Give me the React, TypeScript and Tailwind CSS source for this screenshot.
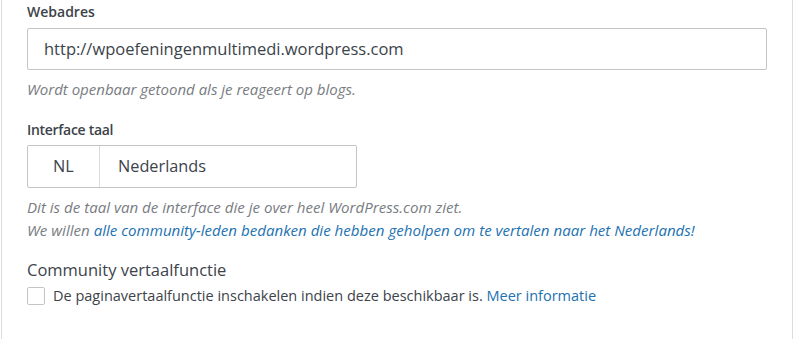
import React from 'react';

export default function App() {
  return (
    <div className="w-[794px] h-[339px] bg-white overflow-hidden font-['Open_Sans','Noto_Sans',sans-serif]">
      <div className="ml-px mr-px h-full border-x border-[#dcdcde] pl-[25px] pr-[25px] pt-[2px]">
        {/* Webadres */}
        <label className="block text-[14px] leading-[20px] font-semibold text-[#3c434a]">Webadres</label>
        <div className="mt-[6px] h-[42px] flex items-center border border-[#c3c4c7] rounded-[2px] px-4 text-[16.5px] text-[#3c434a]">
          http://wpoefeningenmultimedi.wordpress.com
        </div>
        <p className="mt-[9px] text-[15px] leading-[20px] italic text-[#787c82]">
          Wordt openbaar getoond als je reageert op blogs.
        </p>

        {/* Interface taal */}
        <label className="block mt-[21px] text-[14px] leading-[20px] font-semibold tracking-[-0.3px] text-[#3c434a]">Interface taal</label>
        <div className="mt-[5px] w-[330px] h-[43px] flex border border-[#c3c4c7] rounded-[2px] text-[16.3px] text-[#3c434a]">
          <div className="w-[72px] flex items-center justify-center border-r border-[#dcdcde]">NL</div>
          <div className="flex items-center pl-[18px]">Nederlands</div>
        </div>
        <div className="mt-[8px] text-[15.1px] leading-[23px] italic text-[#787c82]">
          <p>Dit is de taal van de interface die je over heel WordPress.com ziet.</p>
          <p>
            We willen{' '}
            <a className="text-[#2271b1]">alle community-leden bedanken die hebben geholpen om te vertalen naar het Nederlands!</a>
          </p>
        </div>

        {/* Community vertaalfunctie */}
        <h3 className="mt-[16px] text-[16.5px] leading-[24px] text-[#3c434a]">Community vertaalfunctie</h3>
        <div className="mt-[4px] flex items-center gap-[8px] text-[14.5px] leading-[20px] text-[#3c434a]">
          <span className="w-[18px] h-[18px] shrink-0 border border-[#c3c4c7] rounded-[2px] bg-white" />
          <span>
            De paginavertaalfunctie inschakelen indien deze beschikbaar is.{' '}
            <a className="text-[#2271b1]">Meer informatie</a>
          </span>
        </div>
      </div>
    </div>
  );
}
